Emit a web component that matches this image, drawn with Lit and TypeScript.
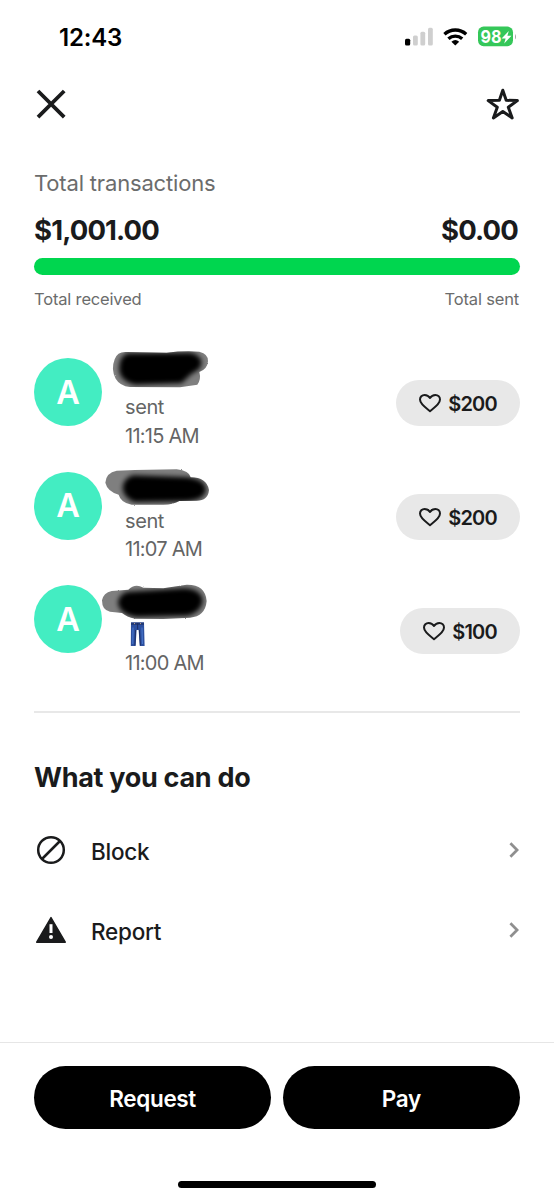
import { LitElement, html, css, svg } from "lit";
import { customElement, property } from "lit/decorators.js";

const INK = "#1a1b1c";

/* Each scribble is a grey outer stroke that darkens into a dense black core. */
const scribbles = [
  {
    dy: -8,
    outer: "M320 36 L440 38 Q490 32 538 35 Q566 42 564 64 Q562 88 538 96 Q544 118 532 134 L480 142 L330 141 Q300 138 287 116 Q272 88 284 58 Q292 34 320 36Z",
    core: "M325 50 L510 48 Q545 58 530 80 L505 96 L480 120 L345 124 Q305 112 308 82 Q308 56 325 50Z",
  },
  {
    dy: -6.7,
    outer: "M290 46 L345 44 L470 42 Q508 46 512 66 Q560 66 567 104 Q564 136 530 136 L478 137 Q460 148 430 148 L335 148 Q302 142 296 118 Q262 108 256 82 Q258 52 290 46Z",
    core: "M340 70 L500 76 Q550 82 548 106 Q540 126 500 128 L345 130 Q318 118 318 96 Q320 78 340 70Z",
  },
  {
    dy: -5.3,
    outer: "M275 64 L325 60 Q345 40 370 54 L430 56 L500 45 Q556 44 560 94 Q556 140 510 144 L430 148 L345 147 Q320 142 306 130 L270 126 Q246 122 246 92 Q250 70 275 64Z",
    core: "M325 76 L400 72 L490 66 Q540 68 538 96 Q530 122 500 128 L350 132 Q310 126 304 100 Q306 82 325 76Z",
  },
];

const jeans = svg`
  <svg class="jeans" viewBox="0 0 15 25">
    <path d="M1 .5H14L14.6 24H9.8L8.6 8H6.6L5.6 24H.8Z" fill="#2c4f9f"/>
    <path d="M1 .5H14V3H1Z" fill="#233b78"/>
    <path d="M3 5.5L2.8 22M12 5.5L12.4 22" stroke="#4a78cc" stroke-width="1.1" fill="none"/>
    <path d="M7.6 1V7.5M5.6 8L4.9 23.5M9.4 8L10.4 23.5" stroke="#1d2f66" stroke-width="1" fill="none"/>
    <path d="M4 1.6h1M10 1.6h1" stroke="#c9a98a" stroke-width="1"/>
  </svg>`;

@customElement("status-bar")
class StatusBar extends LitElement {
  static styles = css`
    :host { display: flex; justify-content: space-between; align-items: center; height: 74px; padding: 0 38px 0 59px; box-sizing: border-box; }
    .time { font-size: 24px; font-weight: 600; color: #000; letter-spacing: -0.2px; }
    .icons { display: flex; align-items: center; }
    svg { display: block; }
  `;
  render() {
    return html`
      <span class="time">12:43</span>
      <div class="icons">
        <svg width="112" height="24" viewBox="404 25 112 24">
          <rect x="405" y="38.7" width="5.2" height="6.8" rx="1.5" fill="#000"/>
          <rect x="413" y="35.6" width="4.8" height="9.9" rx="1.5" fill="#cfcfcf"/>
          <rect x="420.4" y="31.8" width="4.8" height="13.7" rx="1.5" fill="#cfcfcf"/>
          <rect x="428" y="27.8" width="4.8" height="17.7" rx="1.5" fill="#cfcfcf"/>
          <g fill="none" stroke="#000" stroke-width="3.3">
            <path d="M444.4 34.2a16.2 16.2 0 0 1 21.8 0"/>
            <path d="M448.4 38.8a10.3 10.3 0 0 1 13.8 0"/>
          </g>
          <path d="M451.4 41.7a6 6 0 0 1 7.8 0L455.3 45.6Z" fill="#000"/>
          <rect x="478" y="26.6" width="35" height="19.6" rx="5.6" fill="#35c759"/>
          <path d="M515 34.2c1.3.6 1.3 4.4 0 5Z" fill="#a5a5a5"/>
          <text x="480.6" y="43" font-size="18" font-weight="700" fill="#fff" textLength="21" lengthAdjust="spacingAndGlyphs">98</text>
          <path d="M508.8 31L501.6 38.4H505.6L504.2 43.6L511.4 35.8H507.4Z" fill="#fff"/>
        </svg>
      </div>
    `;
  }
}

@customElement("transaction-row")
class TransactionRow extends LitElement {
  @property({ type: Number }) index = 0;
  @property() note = "";
  @property() time = "";
  @property() amount = "";
  static styles = css`
    :host { display: flex; height: 113.7px; align-items: flex-start; }
    .avatar { width: 68px; height: 68px; margin-top: 10px; border-radius: 50%; background: #43edc2; color: #fff; display: flex; align-items: center; justify-content: center; font-size: 32.5px; font-weight: 600; flex: none; }
    .body { flex: 1; margin-left: -2px; display: flex; flex-direction: column; }
    .scribble { display: block; overflow: visible; }
    .line { padding-left: 25px; height: 28.2px; line-height: 28.2px; font-size: 20px; color: #646565; white-space: nowrap; display: block; }
    .first { padding-top: 1px; }
    .sent { letter-spacing: -0.4px; }
    .time { letter-spacing: -0.75px; padding-top: 0.6px; }
    .jeans { display: block; width: 15px; height: 25px; margin: 2px 0 0 5px; }
    .pill { margin-top: 32.3px; height: 46px; border-radius: 23px; background: #e8e8e8; display: flex; align-items: center; padding: 0 23px 0 22px; gap: 6px; flex: none; }
    .amount { font-size: 20px; font-weight: 600; color: #1a1b1c; letter-spacing: -0.75px; line-height: 24px; padding-top: 2px; }
    .heart { display: block; }
  `;
  render() {
    const s = scribbles[this.index];
    const place = `translate(-80 ${s.dy}) scale(.33333)`;
    return html`
      <div class="avatar">A</div>
      <div class="body">
        <svg class="scribble" width="116" height="44" viewBox="0 0 116 44">
          <defs>
            <filter id="edge" x="-10%" y="-20%" width="120%" height="140%">
              <feTurbulence type="fractalNoise" baseFrequency="0.35" numOctaves="2" seed="4" result="n"/>
              <feDisplacementMap in="SourceGraphic" in2="n" scale="1.6" xChannelSelector="R" yChannelSelector="G"/>
              <feGaussianBlur stdDeviation="0.7"/>
            </filter>
            <filter id="soft" x="-20%" y="-40%" width="140%" height="180%"><feGaussianBlur stdDeviation="2.8"/></filter>
            <clipPath id="shape"><path transform=${place} d=${s.outer}/></clipPath>
          </defs>
          <g filter="url(#edge)"><path transform=${place} d=${s.outer} fill="#000" fill-opacity=".5"/></g>
          <g clip-path="url(#shape)">
            <g filter="url(#soft)"><path transform=${place} d=${s.core} fill="#000" stroke="#000" stroke-width="20" stroke-linejoin="round"/></g>
          </g>
        </svg>
        <span class="line first sent">${this.note || jeans}</span>
        <span class="line time">${this.time}</span>
      </div>
      <div class="pill">
        <svg class="heart" width="24" height="20" viewBox="0 0 24 20">
          <path d="M12 18.1C9.4 16 2 11.4 2 6.6C2 3.8 4 1.9 6.6 1.9C9.2 1.9 10.9 3.2 12 5C13.1 3.2 14.8 1.9 17.4 1.9C20 1.9 22 3.8 22 6.6C22 11.4 14.6 16 12 18.1Z" fill="none" stroke="${INK}" stroke-width="2" stroke-linejoin="round"/>
        </svg>
        <span class="amount">${this.amount}</span>
      </div>
    `;
  }
}

@customElement("app-root")
class AppRoot extends LitElement {
  static styles = css`
    :host { display: flex; flex-direction: column; width: 554px; height: 1200px; background: #fff; color: #1a1b1c; font-family: Inter, "Liberation Sans", sans-serif; overflow: hidden; }
    svg { display: block; }
    .nav { display: flex; justify-content: space-between; align-items: center; height: 60px; padding: 0 34px 0 35px; }
    .content { padding: 0 34px; display: flex; flex-direction: column; }
    .caption { margin-top: 35px; height: 28px; line-height: 28px; font-size: 22px; color: #6b6c6c; letter-spacing: -0.17px; }
    .pair { display: flex; justify-content: space-between; }
    .totals { margin-top: 16px; padding-right: 2px; height: 34px; line-height: 34px; font-size: 27.5px; font-weight: 700; letter-spacing: -0.85px; }
    .bar { margin-top: 11px; height: 17px; border-radius: 9px; background: #00d64f; }
    .labels { margin-top: 13px; padding-right: 1px; height: 22px; line-height: 22px; font-size: 16.5px; color: #6b6c6c; letter-spacing: -0.17px; }
    .list { margin-top: 38px; display: flex; flex-direction: column; height: 363px; }
    .rule { height: 2px; background: #e8e8e8; }
    .heading { margin-top: 48px; height: 34px; line-height: 34px; font-size: 27px; font-weight: 700; letter-spacing: -0.3px; }
    .action { display: flex; align-items: center; height: 80px; }
    .first { margin-top: 15px; }
    .label { flex: 1; margin-left: 23px; padding-top: 2px; font-size: 22.5px; font-weight: 500; letter-spacing: -0.25px; }
    .footer { margin-top: auto; height: 157px; border-top: 1.5px solid #e6e6e6; box-sizing: content-box; display: flex; flex-direction: column; align-items: center; }
    .buttons { align-self: stretch; display: flex; gap: 11.5px; padding: 23px 34px 0; }
    .button { flex: 1; height: 63px; border-radius: 32px; background: #000; color: #fff; font-size: 22.5px; font-weight: 600; letter-spacing: -0.35px; display: flex; align-items: center; justify-content: center; padding-top: 1px; box-sizing: border-box; }
    .home { width: 198px; height: 7px; border-radius: 4px; background: #000; margin-top: 52px; }
  `;
  render() {
    const chevron = html`<svg width="12" height="18" viewBox="0 0 12 18"><path d="M2.4 2.2L9.1 9L2.4 15.8" fill="none" stroke="#8f8f8f" stroke-width="2.7"/></svg>`;
    return html`
      <status-bar></status-bar>
      <div class="nav">
        <svg width="32" height="32" viewBox="0 0 32 32"><path d="M3 3L29.2 29.2M29.2 3L3 29.2" stroke="${INK}" stroke-width="3.8"/></svg>
        <svg width="34" height="34" viewBox="0 0 34 34"><path d="M16.8 3.2L20.2 13.3L31.4 13.6L22.3 20.2L26.2 30.9L16.8 24.5L7.4 30.9L11.3 20.2L2.2 13.6L13.4 13.3Z" fill="none" stroke="${INK}" stroke-width="3" stroke-linejoin="round"/></svg>
      </div>
      <div class="content">
        <div class="caption">Total transactions</div>
        <div class="pair totals"><span>$1,001.00</span><span>$0.00</span></div>
        <div class="bar"></div>
        <div class="pair labels"><span>Total received</span><span>Total sent</span></div>
        <div class="list">
          <transaction-row .index=${0} note="sent" time="11:15 AM" amount="$200"></transaction-row>
          <transaction-row .index=${1} note="sent" time="11:07 AM" amount="$200"></transaction-row>
          <transaction-row .index=${2} time="11:00 AM" amount="$100"></transaction-row>
        </div>
        <div class="rule"></div>
        <div class="heading">What you can do</div>
        <div class="action first">
          <svg width="34" height="34" viewBox="0 0 34 34"><g fill="none" stroke="${INK}" stroke-width="2.5"><circle cx="17" cy="17" r="12.8"/><path d="M8 26L26 8"/></g></svg>
          <span class="label">Block</span>${chevron}
        </div>
        <div class="action">
          <svg width="34" height="34" viewBox="0 0 34 34"><path d="M17 4.6L31.3 29.2H2.7Z" fill="${INK}" stroke="${INK}" stroke-width="1.4" stroke-linejoin="round"/><path d="M17 11.2V20" stroke="#fff" stroke-width="3"/><circle cx="17" cy="24" r="2" fill="#fff"/></svg>
          <span class="label">Report</span>${chevron}
        </div>
      </div>
      <div class="footer">
        <div class="buttons"><div class="button">Request</div><div class="button">Pay</div></div>
        <div class="home"></div>
      </div>
    `;
  }
}
